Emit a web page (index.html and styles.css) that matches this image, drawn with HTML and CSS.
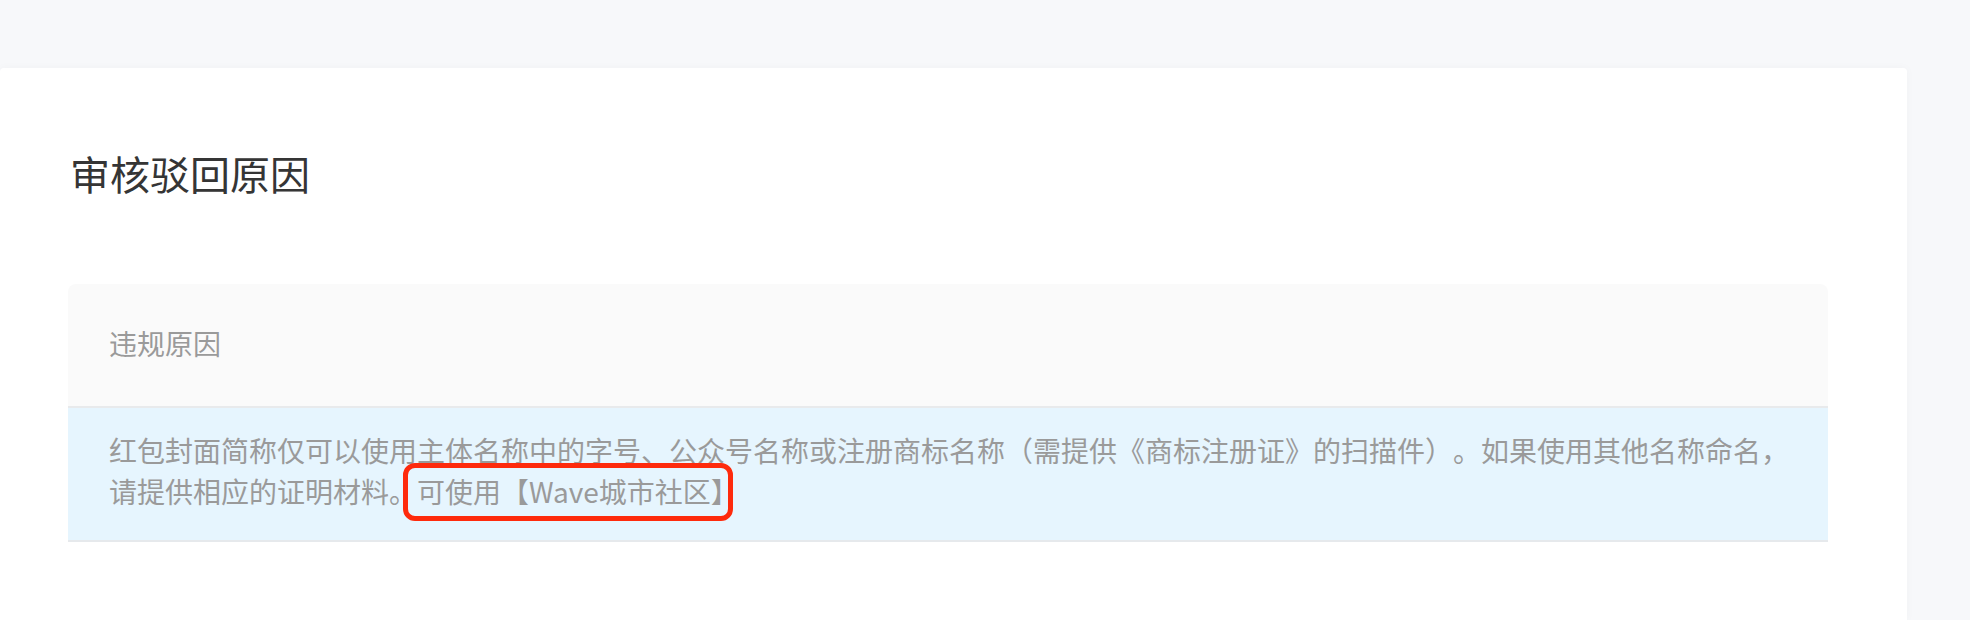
FILE: index.html
```html
<!DOCTYPE html>
<html lang="zh-CN">
<head>
    <meta charset="UTF-8">
    <meta name="viewport" content="width=device-width, initial-scale=1.0">
    <title>审核驳回原因</title>
    <link rel="stylesheet" href="styles.css">
</head>
<body>
    <div class="page">
        <div class="card">
            <h1 class="card-title">审核驳回原因</h1>

            <div class="reason-table">
                <div class="reason-head">违规原因</div>
                <div class="reason-row">
                    红包封面简称仅可以使用主体名称中的字号、公众号名称或注册商标名称（需提供《商标注册证》的扫描件）。如果使用其他名称命名，请提供相应的证明材料。<span class="mark">可使用【Wave城市社区】</span>
                </div>
            </div>
        </div>
    </div>
</body>
</html>
```

FILE: styles.css
```css
body {
    margin: 0;
    background-color: #f7f8fa;
    font-family: "Noto Sans CJK SC", "Noto Sans", sans-serif;
    text-spacing-trim: space-all;
}
.page {
    padding: 68px 63px 0 0;
    height: 552px;
    overflow: hidden;
}
.card {
    background-color: #ffffff;
    border-radius: 4px 4px 0 0;
    box-shadow: 0 0 10px rgba(0, 0, 0, 0.03);
    padding: 77px 79px 0 68px;
    height: 100%;
    box-sizing: border-box;
}
.card-title {
    margin: 0 0 83px 2px;
    font-size: 40px;
    line-height: 56px;
    font-weight: normal;
    color: #353535;
}
.reason-table {
    font-size: 28px;
    color: #9a9a9a;
}
.reason-head {
    background-color: #fafafa;
    border-radius: 8px 8px 0 0;
    border-bottom: 2px solid #e8eaec;
    padding: 38px 41px 42px;
    line-height: 42px;
}
.reason-row {
    background-color: #e6f5fe;
    border-bottom: 2px solid #e6e9ec;
    padding: 22px 30px 28px 41px;
    line-height: 41px;
}
.mark {
    position: relative;
}
.mark::after {
    content: "";
    position: absolute;
    left: -14px;
    right: 6px;
    top: -8px;
    bottom: -10px;
    border: 5px solid #fe2a0c;
    border-radius: 12px;
}
```
